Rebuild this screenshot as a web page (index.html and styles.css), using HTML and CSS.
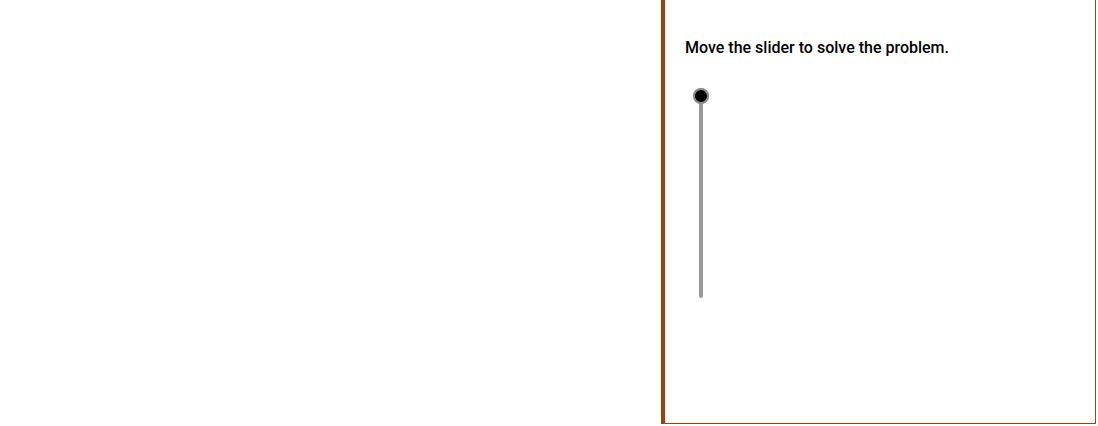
FILE: index.html
```html
<!DOCTYPE html>
<html>
<head>
  <meta charset="UTF-8">
  <title>Slider Problem</title>
  <link rel="stylesheet" href="styles.css">
</head>
<body>
  <div class="page">
    <div class="stage"></div>
    <div class="panel">
      <p class="prompt">Move the slider to solve the problem.</p>
      <div class="slider">
        <div class="track"></div>
        <div class="thumb"></div>
      </div>
    </div>
  </div>
</body>
</html>
```
FILE: styles.css
```css
body { margin: 0; background: #fff; font-family: Roboto, "Liberation Sans", sans-serif; }
.page { display: flex; height: 424px; width: 1096px; }
.stage { flex: 0 0 661px; }
.panel { flex: 1; border-left: 4px solid #a0410d; border-right: 1px solid #a0410d; border-bottom: 1px solid #a0410d; padding: 38px 20px 0 20px; }
.prompt { margin: 0; font-size: 16px; font-weight: 500; color: #000; line-height: 20px; }
.slider { position: relative; margin-top: 38px; margin-left: 9px; width: 16px; height: 210px; }
.track { position: absolute; left: 5px; top: 0; width: 4px; height: 202px; background: #999; border-radius: 2px; }
.thumb { position: absolute; left: -1px; top: -8px; width: 12px; height: 12px; border-radius: 50%; background: #000; border: 2px solid #8a8a8a; box-shadow: 0 0 1px #bbb; }
```
